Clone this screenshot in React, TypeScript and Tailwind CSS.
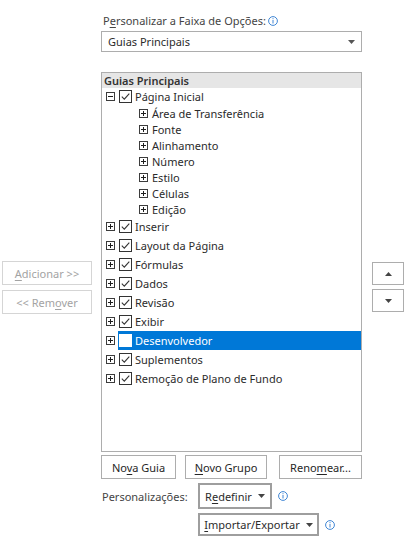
import React from "react";

const Info = () => (
  <svg width="10" height="10" viewBox="0 0 10 10" className="inline-block">
    <circle cx="5" cy="5" r="4.4" fill="none" stroke="#2b79d0" strokeWidth="0.9" />
    <rect x="4.55" y="2.2" width="0.9" height="0.9" fill="#2b79d0" />
    <rect x="4.55" y="3.9" width="0.9" height="3.6" fill="#2b79d0" />
  </svg>
);

const Expander = ({ open }: { open?: boolean }) => (
  <svg width="9" height="9" viewBox="0 0 9 9" className="shrink-0">
    <rect x="0.5" y="0.5" width="8" height="8" fill="#fff" stroke="#3c3c3c" strokeWidth="1" />
    <rect x="2" y="4" width="5" height="1" fill="#1e1e1e" />
    {!open && <rect x="4" y="2" width="1" height="5" fill="#1e1e1e" />}
  </svg>
);

const Check = ({ checked, selected }: { checked: boolean; selected?: boolean }) => (
  <svg width="13" height="13" viewBox="0 0 13 13" className="shrink-0">
    <rect
      x="0.5"
      y="0.5"
      width="12"
      height="12"
      fill="#fff"
      stroke={selected ? "#fff" : "#333"}
      strokeWidth="1"
    />
    {checked && (
      <path d="M2.8 6.6 L5.3 9.1 L10.3 3.6" fill="none" stroke="#333" strokeWidth="1.1" />
    )}
  </svg>
);

const Btn = ({ children, className = "" }: { children: React.ReactNode; className?: string }) => (
  <div
    className={
      "flex items-center justify-center border border-[#adadad] bg-white text-[#262626] " + className
    }
  >
    {children}
  </div>
);

const Tri = ({ up, color = "#444" }: { up?: boolean; color?: string }) => (
  <svg width="7" height="4" viewBox="0 0 7 4">
    {up ? <path d="M0 4 L3.5 0 L7 4 Z" fill={color} /> : <path d="M0 0 L7 0 L3.5 4 Z" fill={color} />}
  </svg>
);

const TopRow = ({
  label,
  checked = true,
  selected,
}: {
  label: string;
  checked?: boolean;
  selected?: boolean;
}) => (
  <div className="h-[19px] flex items-center">
    <div className="w-[16px] flex justify-end pr-[3px]">
      <Expander />
    </div>
    <div
      className={
        "flex-1 h-full flex items-center pl-[1px] " + (selected ? "bg-[#0078d7] text-white" : "")
      }
    >
      <Check checked={checked && !selected} selected={selected} />
      <span className="ml-[3px]">{label}</span>
    </div>
  </div>
);

const SubRow = ({ label }: { label: string }) => (
  <div className="h-[16px] flex items-center pl-[37px]">
    <Expander />
    <span className="ml-[4px]">{label}</span>
  </div>
);

export default function App() {
  return (
    <div className="w-[414px] h-[540px] bg-white flex text-[11px] leading-none text-[#2b2b2b] font-['Segoe_UI','Noto_Sans',sans-serif]">
      <div className="w-[101px] shrink-0 flex flex-col pt-[261px] pl-[2px] gap-[5px]">
        <div className="w-[90px] h-[24px] border border-[#d5d5d5] flex items-center justify-center text-[#a3a3a3]">
          <span>
            <span className="underline underline-offset-2">A</span>dicionar &gt;&gt;
          </span>
        </div>
        <div className="w-[90px] h-[24px] border border-[#d5d5d5] flex items-center justify-center text-[#a3a3a3]">
          <span>
            &lt;&lt; Rem<span className="underline underline-offset-2">o</span>ver
          </span>
        </div>
      </div>

      <div className="w-[261px] shrink-0 flex flex-col pt-[13px]">
        <div className="h-[15px] flex items-center pl-[2px] text-[#444]">
          <span>
            P<span className="underline underline-offset-2">e</span>rsonalizar a Faixa de Opções:
          </span>
          <span className="ml-[2px] flex">
            <Info />
          </span>
        </div>
        <div className="mt-[3px] h-[21px] border border-[#adadad] flex items-center justify-between pl-[6px] pr-[6px]">
          <span>Guias Principais</span>
          <Tri color="#555" />
        </div>

        <div className="mt-[20px] h-[380px] border border-[#adadad] flex flex-col">
          <div className="h-[15px] bg-[#e6e6e6] flex items-center pl-[2px] font-semibold text-[#333]">
            Guias Principais
          </div>
          <div className="h-[17px] flex items-center">
            <div className="w-[16px] flex justify-end pr-[3px]">
              <Expander open />
            </div>
            <div className="pl-[1px] flex items-center">
              <Check checked />
              <span className="ml-[3px]">Página Inicial</span>
            </div>
          </div>
          <SubRow label="Área de Transferência" />
          <SubRow label="Fonte" />
          <SubRow label="Alinhamento" />
          <SubRow label="Número" />
          <SubRow label="Estilo" />
          <SubRow label="Células" />
          <SubRow label="Edição" />
          <TopRow label="Inserir" />
          <TopRow label="Layout da Página" />
          <TopRow label="Fórmulas" />
          <TopRow label="Dados" />
          <TopRow label="Revisão" />
          <TopRow label="Exibir" />
          <TopRow label="Desenvolvedor" checked={false} selected />
          <TopRow label="Suplementos" />
          <TopRow label="Remoção de Plano de Fundo" />
        </div>

        <div className="mt-[3px] h-[24px] flex">
          <Btn className="w-[75px] h-full">
            <span>
              No<span className="underline underline-offset-2">v</span>a Guia
            </span>
          </Btn>
          <Btn className="ml-[9px] w-[82px] h-full">
            <span>
              <span className="underline underline-offset-2">N</span>ovo Grupo
            </span>
          </Btn>
          <Btn className="ml-[12px] w-[83px] h-full">
            <span>
              Reno<span className="underline underline-offset-2">m</span>ear...
            </span>
          </Btn>
        </div>

        <div className="mt-[4px] h-[26px] flex items-center">
          <span className="w-[97px] pl-[1px] text-[#444]">Personalizações:</span>
          <div className="w-[74px] h-full border-2 border-[#9e9e9e] flex items-center justify-center gap-[6px]">
            <span>
              R<span className="underline underline-offset-2">e</span>definir
            </span>
            <Tri />
          </div>
          <span className="ml-[6px] flex">
            <Info />
          </span>
        </div>

        <div className="mt-[4px] h-[23px] flex items-center pl-[97px]">
          <div className="w-[121px] h-full border-2 border-[#9e9e9e] flex items-center justify-center gap-[6px]">
            <span>
              <span className="underline underline-offset-2">I</span>mportar/Exportar
            </span>
            <Tri />
          </div>
          <span className="ml-[6px] flex">
            <Info />
          </span>
        </div>
      </div>

      <div className="flex flex-col pl-[10px] pt-[262px] gap-[4px]">
        <Btn className="w-[32px] h-[23px]">
          <Tri up />
        </Btn>
        <Btn className="w-[32px] h-[23px]">
          <Tri />
        </Btn>
      </div>
    </div>
  );
}
